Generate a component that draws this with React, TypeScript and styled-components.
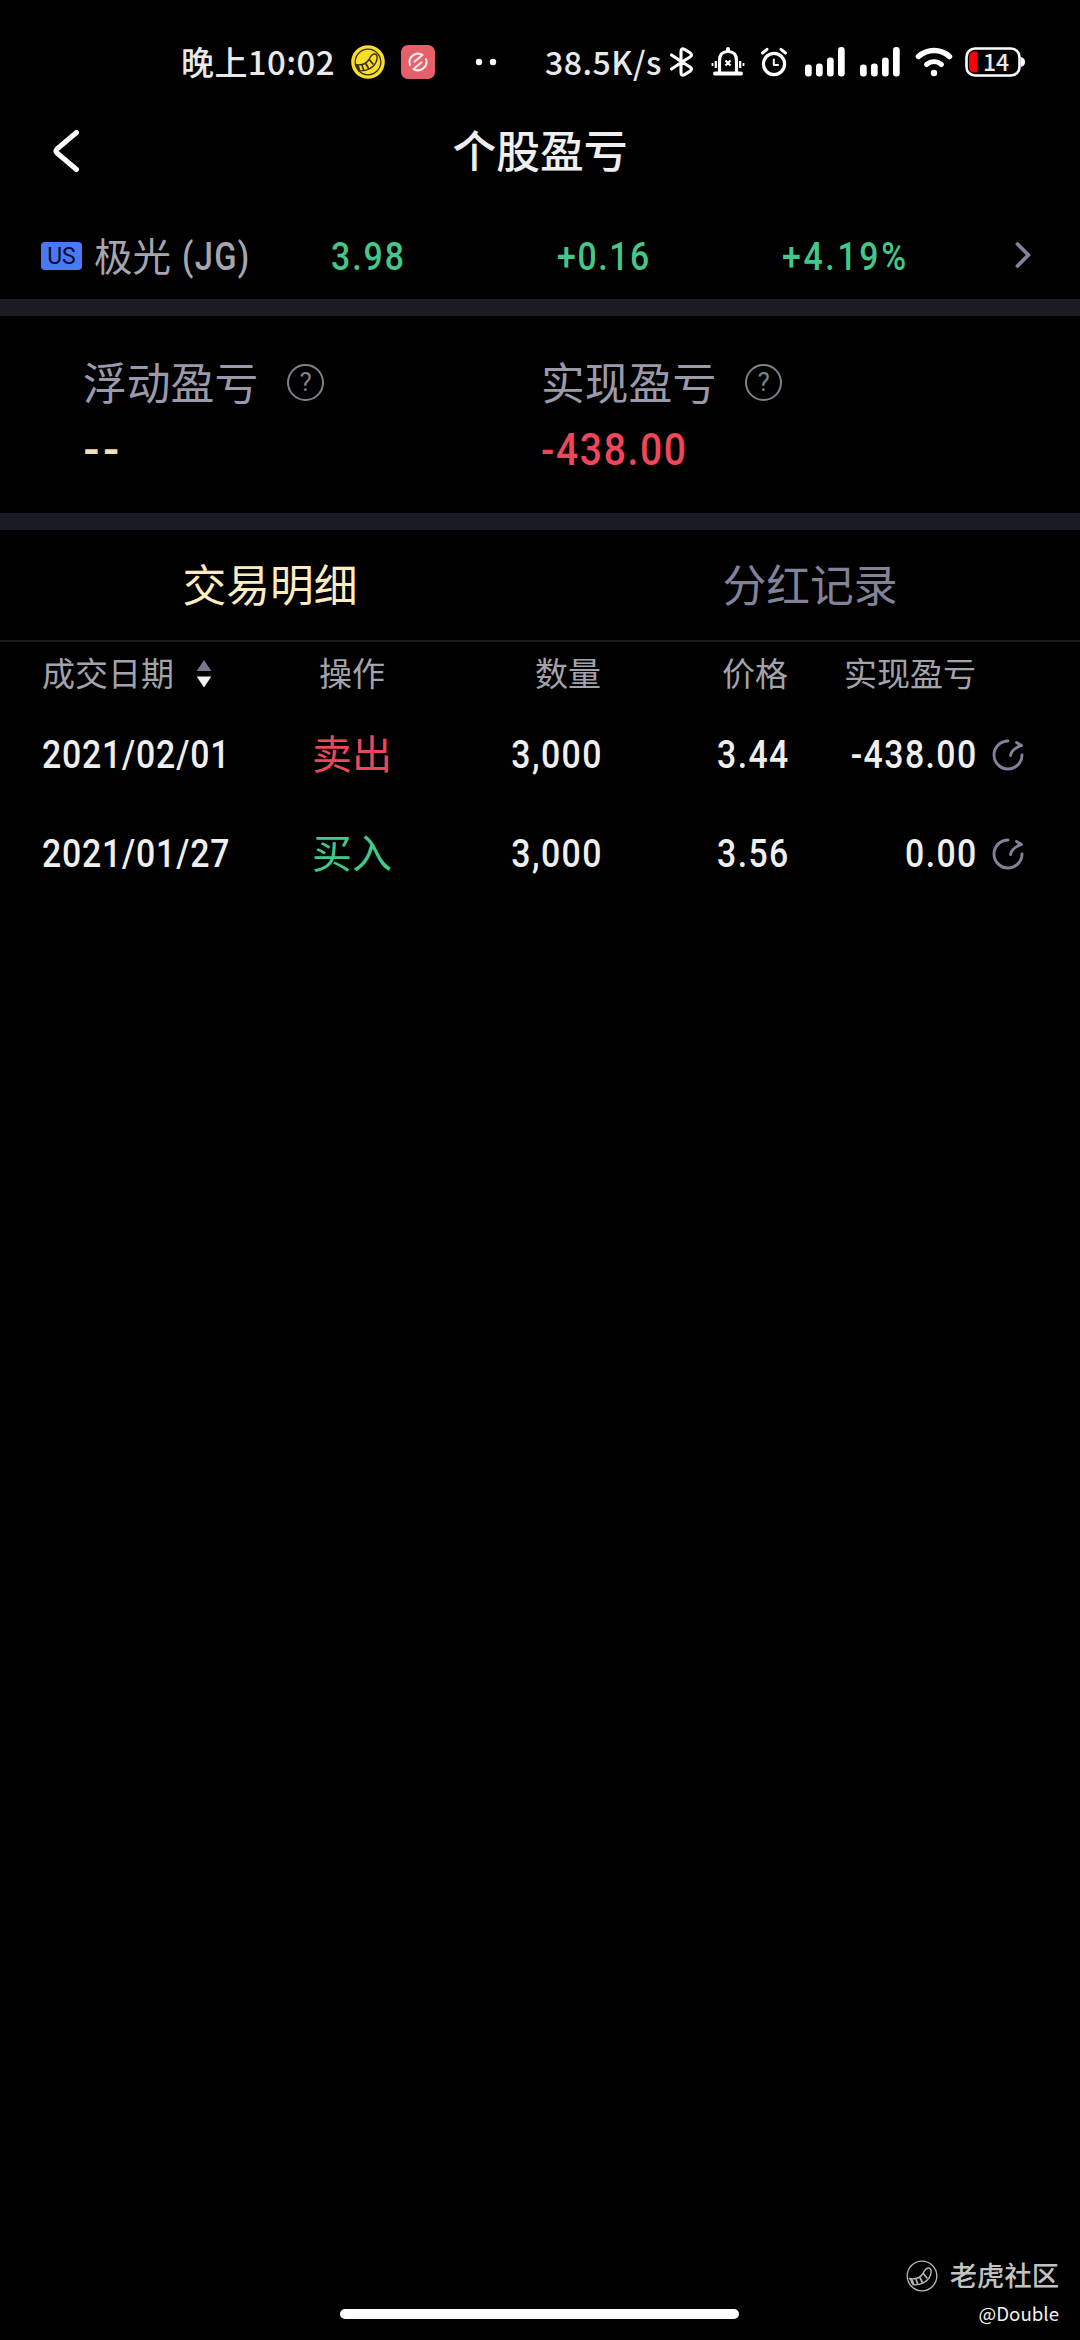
import React from "react";
import styled, { createGlobalStyle } from "styled-components";

const cjk = `"Noto Sans CJK SC", "Noto Sans", sans-serif`;
const num = `Roboto, "Noto Sans CJK SC", sans-serif`;

const color = {
  green: "#43c88a",
  red: "#f0465a",
  white: "#efefef",
  label: "#9a9aaa",
  head: "#a3a3ab",
  gold: "#fdecc0",
  muted: "#82829a",
  band: "#1b1b23",
};

const Global = createGlobalStyle`
  html, body { margin: 0; background: #000; }
  * { box-sizing: border-box; }
  svg { display: block; flex: none; }
`;

const Screen = styled.main`
  position: relative;
  width: 1080px;
  height: 2340px;
  overflow: hidden;
  background: #000;
  font-family: ${cjk};
  display: flex;
  flex-direction: column;
`;

const StatusBar = styled.header`
  height: 110px;
  padding: 14px 50px 0 181px;
  display: flex;
  align-items: center;
  color: #e9e9e9;
`;

const StatusText = styled.span<{ $size: number; $width: number; $gap?: number }>`
  display: block;
  flex: none;
  width: ${(p) => p.$width}px;
  padding-bottom: 2px;
  font-size: ${(p) => p.$size}px;
  letter-spacing: ${(p) => p.$gap ?? 0}px;
  font-weight: 500;
  line-height: 40px;
  white-space: nowrap;
`;

const Slot = styled.span<{ $ml: number }>`
  flex: none;
  margin-left: ${(p) => p.$ml}px;
`;

const TitleBar = styled.nav`
  height: 90px;
  padding: 0 51px 8px;
  display: grid;
  grid-template-columns: 100px 1fr 100px;
  align-items: center;
`;

const Title = styled.h1`
  margin: 0;
  padding-bottom: 5px;
  text-align: center;
  color: ${color.white};
  font-size: 43.8px;
  font-weight: 500;
  line-height: 60px;
`;

const Quote = styled.section`
  height: 99px;
  padding: 12px 47px 0 41px;
  display: grid;
  grid-template-columns: 290px 226px 225px 1fr auto;
  align-items: center;
`;

const Stock = styled.div`
  display: flex;
  align-items: center;
`;

const Market = styled.span`
  width: 41px;
  height: 28px;
  margin-right: 12px;
  border-radius: 4px;
  background: #4a79f6;
  color: #05092c;
  font: 400 23px/29px ${num};
  text-align: center;
`;

const StockName = styled.span`
  width: 88px;
  padding-bottom: 4px;
  color: #a6a6b0;
  font-size: 38.5px;
  line-height: 50px;
`;

const Figure = styled.span<{
  $color: string;
  $size?: number;
  $gap?: number;
  $weight?: number;
  $stretch?: number;
  $drop?: number;
  $end?: boolean;
}>`
  display: inline-block;
  margin-right: ${(p) => (p.$end ? -2 : 0)}px;
  transform: scaleX(${(p) => p.$stretch ?? 0.89});
  transform-origin: ${(p) => (p.$end ? "right" : "left")} center;
  color: ${(p) => p.$color};
  font-family: ${num};
  font-size: ${(p) => p.$size ?? 38}px;
  font-weight: ${(p) => p.$weight ?? 500};
  letter-spacing: ${(p) => p.$gap ?? 1.6}px;
  line-height: 50px;
  padding-top: ${(p) => p.$drop ?? 1}px;
  white-space: nowrap;
`;

const Band = styled.div`
  height: 17px;
  background: ${color.band};
`;

const Summary = styled.section`
  height: 197px;
  padding: 35px 0 0 83px;
  display: grid;
  grid-template-columns: 458px 1fr;
`;

const SummaryCell = styled.div`
  display: flex;
  flex-direction: column;
`;

const SummaryLabel = styled.div`
  height: 62px;
  display: flex;
  align-items: center;
  gap: 29px;
  color: ${color.label};
  font-size: 43.8px;
  line-height: 58px;
`;

const SummaryName = styled.span`
  padding-bottom: 3px;
`;

const SummaryValue = styled.div`
  height: 72px;
  display: flex;
  align-items: center;
`;

const Tabs = styled.div`
  height: 112px;
  display: grid;
  grid-template-columns: 1fr 1fr;
  border-bottom: 2px solid #1c1c20;
`;

const Tab = styled.div<{ $active?: boolean }>`
  text-align: center;
  font-size: 43.8px;
  line-height: 107px;
  color: ${(p) => (p.$active ? color.gold : color.muted)};
`;

const Row = styled.div<{ $height: number }>`
  height: ${(p) => p.$height}px;
  padding-left: 42px;
  display: grid;
  grid-template-columns: 250px 120px 189px 187px 188px 48px;
  align-items: center;
`;

const HeadCell = styled.div<{ $align?: string }>`
  display: flex;
  align-items: center;
  justify-content: ${(p) => p.$align ?? "flex-end"};
  gap: 22px;
  color: ${color.head};
  font-size: 33px;
  line-height: 50px;
`;

const HeadText = styled.span`
  padding-bottom: 4px;
`;

const Cell = styled.div<{ $align?: string }>`
  display: flex;
  align-items: center;
  justify-content: ${(p) => p.$align ?? "flex-end"};
`;

const Side = styled.span<{ $sell: boolean }>`
  padding-bottom: 5px;
  color: ${(p) => (p.$sell ? color.red : color.green)};
  font-size: 40px;
  line-height: 50px;
`;

const Watermark = styled.footer`
  position: absolute;
  right: 21px;
  bottom: 10px;
  display: flex;
  flex-direction: column;
  align-items: flex-end;
`;

const Community = styled.div`
  display: flex;
  align-items: center;
  gap: 11px;
  color: #c2c2c2;
  font-size: 27.3px;
  font-weight: 500;
  line-height: 38px;
`;

const CommunityName = styled.span`
  padding-bottom: 3px;
`;

const Author = styled.div`
  color: #f2f2f2;
  font: 400 18.7px/34px ${cjk};
`;

const HomeBar = styled.div`
  position: absolute;
  left: 340px;
  bottom: 21px;
  width: 399px;
  height: 10px;
  border-radius: 5px;
  background: #fff;
`;

const TigerTail = ({ size, fill, stroke, ring }: { size: number; fill: string; stroke: string; ring: number }) => (
  <svg width={size} height={size} viewBox="0 0 34 34" fill="none">
    {fill !== "none" && <circle cx="17" cy="17" r="16.8" fill={fill} />}
    <circle cx="17" cy="17" r={ring} stroke={stroke} strokeWidth="1.3" />
    <path
      d="M4 19.500C9 20.500 14.500 20 18 14.500C19.500 11.500 20.500 9.300 23 9C26 8.800 27 12 25.500 16C23 22.500 16 26.500 7.500 25.800"
      stroke={stroke}
      strokeWidth="1.4"
    />
    <path d="M11 20.300L12.800 25.500M14.800 18.500L17.800 24M18.300 14.500L22.300 19.500" stroke={stroke} strokeWidth="1.7" />
    <path d="M4.500 19.800L7.800 20.200L9.500 25.600L7 25.500Z" fill={stroke} />
  </svg>
);

const RedApp = () => (
  <svg width="34" height="34" viewBox="0 0 34 34" fill="none">
    <rect width="34" height="34" rx="7" fill="#e6606a" />
    <g stroke="#fbe9ea" strokeWidth="2.100" strokeLinecap="round" strokeLinejoin="round">
      <path d="M9 20A8.500 8.500 0 0 1 21.500 10L13.500 16.600" />
      <path d="M25 14A8.500 8.500 0 0 1 12.500 24L20.500 17.400" />
    </g>
  </svg>
);

const Dots = () => (
  <svg width="22" height="8" viewBox="0 0 22 8" fill="#fff">
    <circle cx="4" cy="4" r="3.200" />
    <circle cx="18" cy="4" r="3.200" />
  </svg>
);

const Bluetooth = () => (
  <svg width="26" height="30" viewBox="0 0 26 30" fill="none" stroke="#fff" strokeWidth="3.100" strokeLinecap="round" strokeLinejoin="round">
    <path d="M2.500 8L13 15L21 20Q24 22 21 24.200L15.500 27.600Q12 29.500 12 25.500V4.500Q12 .5 15.500 2.400L21 5.800Q24 8 21 10L13 15L2.500 22" />
  </svg>
);

const Bell = () => (
  <svg width="34" height="30" viewBox="0 0 34 30" fill="none" stroke="#fff">
    <path d="M17 2V4" strokeWidth="4" strokeLinecap="round" />
    <path d="M8.500 25V13.500C8.500 7.500 12 4.500 17 4.500S25.500 7.500 25.500 13.500V25" strokeWidth="3.200" />
    <path d="M4 26.500H30" strokeWidth="4" strokeLinecap="round" />
    <path d="M14.500 13.500L19.500 18.500M19.500 13.500L14.500 18.500" strokeWidth="2.200" />
    <path d="M4.800 14V21M29.200 14V21" strokeWidth="2.200" />
    <path d="M1.500 16V19M32.500 16V19" strokeWidth="1.800" />
  </svg>
);

const Alarm = () => (
  <svg width="28" height="30" viewBox="0 0 28 30" fill="none" stroke="#fff" strokeLinecap="round" strokeLinejoin="round">
    <circle cx="14" cy="17" r="10.600" strokeWidth="3.200" />
    <path d="M2.500 6L7 2.300M25.500 6L21 2.300" strokeWidth="3" />
    <path d="M13.800 12.500V18H18" strokeWidth="2" />
  </svg>
);

const Signal = () => (
  <svg width="40" height="30" viewBox="0 0 40 30" fill="#fff">
    <rect x="0" y="17.500" width="6.700" height="12" rx="3" />
    <rect x="11" y="16.500" width="6.700" height="13" rx="3" />
    <rect x="22" y="10.500" width="6.700" height="19" rx="3" />
    <rect x="33" y="0" width="6.700" height="29.500" rx="3" />
  </svg>
);

const Wifi = () => (
  <svg width="38" height="30" viewBox="0 0 38 30" fill="none" stroke="#fff" strokeLinecap="round">
    <path d="M3.500 9.500C12.500 1.500 25.500 1.500 34.500 9.500" strokeWidth="5.500" />
    <path d="M11.500 17.500C16 13.800 22 13.800 26.500 17.500" strokeWidth="5" />
    <circle cx="19" cy="26" r="3.200" fill="#fff" stroke="none" />
  </svg>
);

const BatteryBox = styled.div`
  position: relative;
  width: 60px;
  height: 30px;
`;

const BatteryLevel = styled.span`
  position: absolute;
  left: 18px;
  top: 0;
  font: 500 23px/28px ${cjk};
  color: #e9e9e9;
`;

const Battery = () => (
  <BatteryBox>
    <svg width="60" height="30" viewBox="0 0 60 30" fill="none">
      <rect x="1.500" y="1.500" width="53" height="27" rx="8.500" stroke="#fff" strokeWidth="2.600" />
      <path d="M56 10Q60 11 60 15T56 20Z" fill="#fff" />
      <path d="M12.500 5.500V24.500Q12.500 25.500 11 25.500H9Q4 25 4 20V10Q4 5 9 4.500H11Q12.500 4.500 12.500 5.500Z" fill="#f00" />
    </svg>
    <BatteryLevel>14</BatteryLevel>
  </BatteryBox>
);

const Back = () => (
  <svg width="30" height="44" viewBox="0 0 30 44" fill="none" stroke="#fff" strokeWidth="5" strokeLinecap="round" strokeLinejoin="round">
    <path d="M25.500 3.500L6 20Q4 22 6 24L25.500 40.500" />
  </svg>
);

const More = () => (
  <svg width="20" height="30" viewBox="0 0 20 30" fill="none" stroke="#82829a" strokeWidth="3.800" strokeLinecap="round" strokeLinejoin="round">
    <path d="M4.500 3L15.500 14L4.500 25" />
  </svg>
);

const HelpRing = styled.span`
  width: 37px;
  height: 37px;
  border: 2.500px solid #80808a;
  border-radius: 50%;
  color: #80808a;
  font: 400 26px/33px ${num};
  text-align: center;
`;

const Sort = () => (
  <svg width="16" height="30" viewBox="0 0 16 30">
    <path d="M8 1L15.300 12H.7Z" fill="#76768c" />
    <path d="M8 28.500L15.300 17.500H.7Z" fill="#f2f2f2" />
  </svg>
);

const Share = () => (
  <svg width="32" height="32" viewBox="0 0 32 32" fill="none" stroke="#82829a" strokeWidth="2.900" strokeLinecap="round" strokeLinejoin="round">
    <path d="M16 2A14 14 0 1 0 30 16" />
    <path d="M18.500 16.500Q19.500 10.500 28 6.800M24.500 3.500L29.500 6.500" />
  </svg>
);

const trades = [
  { date: "2021/02/01", side: "卖出", sell: true, qty: "3,000", price: "3.44", pnl: "-438.00" },
  { date: "2021/01/27", side: "买入", sell: false, qty: "3,000", price: "3.56", pnl: "0.00" },
];

export default function App() {
  return (
    <Screen>
      <Global />
      <StatusBar>
        <StatusText $size={33} $width={170} $gap={0.4}>晚上10:02</StatusText>
        <TigerTail size={34} fill="#f7de28" stroke="#3a3208" ring={12.8} />
        <Slot $ml={16}><RedApp /></Slot>
        <Slot $ml={40}><Dots /></Slot>
        <Slot $ml={48}>
          <StatusText $size={32} $width={124} $gap={0.5}>38.5K/s</StatusText>
        </Slot>
        <Bluetooth />
        <Slot $ml={16}><Bell /></Slot>
        <Slot $ml={15}><Alarm /></Slot>
        <Slot $ml={17}><Signal /></Slot>
        <Slot $ml={15}><Signal /></Slot>
        <Slot $ml={15}><Wifi /></Slot>
        <Slot $ml={12}><Battery /></Slot>
      </StatusBar>

      <TitleBar>
        <Back />
        <Title>个股盈亏</Title>
      </TitleBar>

      <Quote>
        <Stock>
          <Market>US</Market>
          <StockName>极光</StockName>
          <Figure $color="#a6a6b0" $stretch={0.86} $drop={2}>(JG)</Figure>
        </Stock>
        <Figure $color={color.green} $gap={2.2} $drop={3}>3.98</Figure>
        <Figure $color={color.green} $gap={1.8} $drop={3}>+0.16</Figure>
        <Figure $color={color.green} $gap={3} $drop={3}>+4.19%</Figure>
        <More />
      </Quote>

      <Band />

      <Summary>
        <SummaryCell>
          <SummaryLabel><SummaryName>浮动盈亏</SummaryName><HelpRing>?</HelpRing></SummaryLabel>
          <SummaryValue><Figure $color="#f1e2b4" $size={46} $gap={3} $weight={600} $stretch={1}>--</Figure></SummaryValue>
        </SummaryCell>
        <SummaryCell>
          <SummaryLabel><SummaryName>实现盈亏</SummaryName><HelpRing>?</HelpRing></SummaryLabel>
          <SummaryValue><Figure $color={color.red} $size={44} $gap={1.8}>-438.00</Figure></SummaryValue>
        </SummaryCell>
      </Summary>

      <Band />

      <Tabs>
        <Tab $active>交易明细</Tab>
        <Tab>分红记录</Tab>
      </Tabs>

      <Row $height={63}>
        <HeadCell $align="flex-start"><HeadText>成交日期</HeadText><Sort /></HeadCell>
        <HeadCell $align="center"><HeadText>操作</HeadText></HeadCell>
        <HeadCell><HeadText>数量</HeadText></HeadCell>
        <HeadCell><HeadText>价格</HeadText></HeadCell>
        <HeadCell><HeadText>实现盈亏</HeadText></HeadCell>
      </Row>

      {trades.map((t) => (
        <Row key={t.date} $height={99}>
          <Cell $align="flex-start"><Figure $color={color.white} $gap={0.9}>{t.date}</Figure></Cell>
          <Cell $align="center"><Side $sell={t.sell}>{t.side}</Side></Cell>
          <Cell><Figure $color={color.white} $end>{t.qty}</Figure></Cell>
          <Cell><Figure $color={color.white} $end>{t.price}</Figure></Cell>
          <Cell><Figure $color={color.white} $end>{t.pnl}</Figure></Cell>
          <Cell><Share /></Cell>
        </Row>
      ))}

      <Watermark>
        <Community>
          <TigerTail size={34} fill="none" stroke="#b8b8b8" ring={14.8} />
          <CommunityName>老虎社区</CommunityName>
        </Community>
        <Author>@Double</Author>
      </Watermark>
      <HomeBar />
    </Screen>
  );
}
